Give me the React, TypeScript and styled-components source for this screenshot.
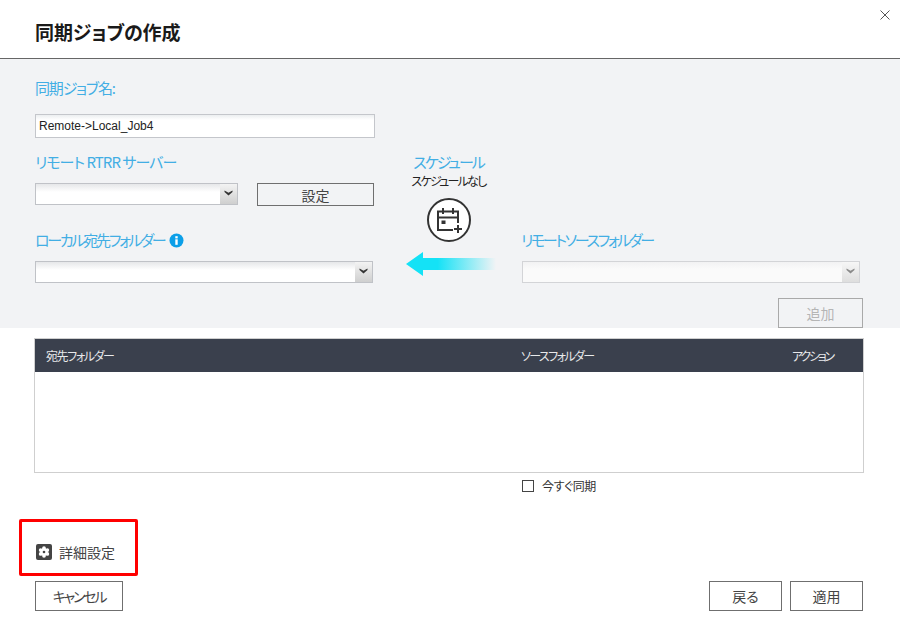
import React from "react";
import styled, { createGlobalStyle } from "styled-components";

const Global = createGlobalStyle`
  html, body { margin: 0; padding: 0; background: #fff; }
  body { font-family: "Noto Sans CJK JP", "Liberation Sans", sans-serif; font-feature-settings: "palt"; }
  * { box-sizing: border-box; }
`;

const Dialog = styled.div`
  position: relative;
  width: 900px;
  height: 635px;
  overflow: hidden;
  background: #fff;
`;
const CloseButton = styled.button`
  position: absolute;
  top: 9px;
  right: 9px;
  width: 12px;
  height: 12px;
  padding: 0;
  border: 0;
  background: none;
  display: flex;
`;
const Header = styled.header`
  height: 59px;
  padding: 18px 0 0 35px;
  border-bottom: 1px solid #666;
`;
const Title = styled.h1`
  margin: 0;
  font-size: 19px;
  line-height: 28px;
  font-weight: 700;
  letter-spacing: -0.1px;
  color: #1a1a1a;
`;
const Panel = styled.section`
  height: 269px;
  background: #f2f3f5;
  padding: 19px 0 0 35px;
  display: grid;
  grid-template-columns: 340px 147px 341px;
`;
const Column = styled.div<{ $top?: number }>`
  display: flex;
  flex-direction: column;
  margin-top: ${(p) => p.$top ?? 0}px;
`;
const CenterColumn = styled(Column)`
  align-items: center;
`;
const Label = styled.label<{ $top?: number; $track: number; $indent?: number }>`
  display: flex;
  align-items: center;
  gap: 5px;
  height: 20px;
  margin-top: ${(p) => p.$top ?? 0}px;
  margin-left: ${(p) => p.$indent ?? 0}px;
  font-size: 15px;
  line-height: 20px;
  letter-spacing: ${(p) => p.$track}px;
  color: #42aee4;
`;
const NameInput = styled.div`
  height: 24px;
  margin-top: 16px;
  padding-left: 3px;
  border: 1px solid #c4c6cb;
  background: linear-gradient(#eceef0, #fff 5px);
  font-family: "Liberation Sans", sans-serif;
  font-size: 12px;
  line-height: 22px;
  color: #222;
`;
const Row = styled.div`
  display: flex;
  align-items: flex-start;
  margin-top: 11px;
  gap: 19px;
`;
const Select = styled.div<{ $width: number; $disabled?: boolean; $top?: number }>`
  display: flex;
  justify-content: flex-end;
  width: ${(p) => p.$width}px;
  height: 22px;
  margin-top: ${(p) => p.$top ?? 0}px;
  border: 1px solid ${(p) => (p.$disabled ? "#d3d4d7" : "#c0c2c7")};
  background: ${(p) =>
    p.$disabled ? "linear-gradient(#f2f2f3, #fafafa 7px)" : "linear-gradient(#e6e7e9, #fff 8px)"};
`;
const SelectArrow = styled.span<{ $disabled?: boolean }>`
  width: 17px;
  height: 100%;
  display: flex;
  align-items: center;
  justify-content: center;
  padding-bottom: 3px;
  background: ${(p) =>
    p.$disabled ? "linear-gradient(#f6f6f6, #dedede)" : "linear-gradient(#f3f3f3, #cfcfcf)"};
`;
const Button = styled.button<{ $width: number; $muted?: boolean; $height?: number; $track?: number }>`
  width: ${(p) => p.$width}px;
  height: ${(p) => p.$height ?? 30}px;
  padding: 0;
  border: 1px solid ${(p) => (p.$muted ? "#a9a9a9" : "#6f6f6f")};
  background: transparent;
  font-family: inherit;
  font-feature-settings: "palt";
  font-size: 14px;
  letter-spacing: ${(p) => p.$track ?? 0}px;
  color: ${(p) => (p.$muted ? "#b5b5b5" : "#444")};
`;
const ScheduleTitle = styled.div`
  height: 20px;
  font-size: 15px;
  line-height: 20px;
  letter-spacing: -2px;
  color: #42aee4;
`;
const ScheduleNote = styled.div`
  height: 18px;
  font-size: 12px;
  line-height: 18px;
  letter-spacing: -1.75px;
  color: #222;
`;
const ScheduleButton = styled.div`
  width: 44px;
  height: 44px;
  margin-top: 8px;
  border: 2px solid #333;
  border-radius: 50%;
  background: #fff;
  display: flex;
  align-items: center;
  justify-content: center;
`;
const FlowArrow = styled.svg`
  display: block;
  margin: 10px 0 0 4px;
`;
const AddRow = styled.div`
  display: flex;
  justify-content: flex-end;
  margin-top: 15px;
`;
const Table = styled.section`
  width: 830px;
  height: 135px;
  margin: 10px 0 0 34px;
  border: 1px solid #cfcfcf;
`;
const TableHead = styled.div`
  height: 33px;
  display: grid;
  grid-template-columns: 475px 1fr auto;
  align-items: center;
  padding: 0 30px 0 11px;
  background: #3a404d;
  font-size: 12px;
  color: #e8e9eb;
`;
const HeadCell = styled.span<{ $track: number }>`
  letter-spacing: ${(p) => p.$track}px;
`;
const SyncRow = styled.label`
  display: flex;
  align-items: center;
  gap: 8px;
  height: 14px;
  margin: 6px 0 0 522px;
  font-size: 12px;
  line-height: 14px;
  letter-spacing: -0.4px;
  color: #333;
`;
const CheckBox = styled.span`
  width: 12px;
  height: 12px;
  border: 1px solid #444;
  background: #fff;
`;
const DetailRow = styled.div`
  position: relative;
  display: flex;
  align-items: center;
  gap: 7px;
  width: max-content;
  height: 16px;
  margin: 51px 0 0 36px;
  font-size: 14px;
  line-height: 15px;
  color: #444;
`;
const Highlight = styled.div`
  position: absolute;
  left: -17px;
  top: -25px;
  width: 119px;
  height: 57px;
  border: 3px solid #f00;
  border-radius: 2px;
`;
const Footer = styled.footer`
  display: flex;
  justify-content: space-between;
  margin-top: 21px;
  padding: 0 37px 0 35px;
`;
const FooterGroup = styled.div`
  display: flex;
  gap: 8px;
`;

const Chevron = ({ color }: { color: string }) => (
  <svg width="9" height="6" viewBox="0 0 9 6">
    <path d="M0.5 0.5 L4.5 2.8 L8.5 0.5 L8.5 2 L4.5 5.5 L0.5 2 Z" fill={color} />
  </svg>
);

export default function App() {
  return (
    <Dialog>
      <Global />
      <CloseButton aria-label="close">
        <svg width="12" height="12" viewBox="0 0 12 12">
          <path d="M1.5 1.5 L10.5 10.5 M10.5 1.5 L1.5 10.5" stroke="#555" strokeWidth="1" fill="none" />
        </svg>
      </CloseButton>
      <Header>
        <Title>同期ジョブの作成</Title>
      </Header>
      <Panel>
        <Column>
          <Label $track={-1.2}>同期ジョブ名:</Label>
          <NameInput>Remote-&gt;Local_Job4</NameInput>
          <Label $top={14} $track={-0.95}>リモート RTRR サーバー</Label>
          <Row>
            <Select $width={203} $top={0}>
              <SelectArrow>
                <Chevron color="#333" />
              </SelectArrow>
            </Select>
            <Button $width={117} $height={23}>設定</Button>
          </Row>
          <Label $top={24} $track={-2.25}>
            ローカル宛先フォルダー
            <svg width="15" height="15" viewBox="0 0 15 15">
              <circle cx="7.5" cy="7.5" r="7" fill="#0c9fe8" />
              <rect x="6.3" y="6.3" width="2.4" height="5.5" fill="#fff" />
              <rect x="6.3" y="3.2" width="2.4" height="2.2" fill="#fff" />
            </svg>
          </Label>
          <Select $width={338} $top={11}>
            <SelectArrow>
              <Chevron color="#333" />
            </SelectArrow>
          </Select>
        </Column>
        <CenterColumn $top={74}>
          <ScheduleTitle>スケジュール</ScheduleTitle>
          <ScheduleNote>スケジュールなし</ScheduleNote>
          <ScheduleButton>
            <svg width="26" height="26" viewBox="0 0 26 26" fill="none" stroke="#333" strokeWidth="2">
              <path d="M1 4.5 H22 V16 M2 4.5 V23 H17 M2 10.5 H22 M7 1 V7 M17 1 V7" />
              <rect x="5.5" y="13.5" width="4" height="3.5" fill="#333" stroke="none" />
              <path d="M22 18 V26 M18 22 H26" />
            </svg>
          </ScheduleButton>
          <FlowArrow width="90" height="24" viewBox="0 0 90 24">
            <defs>
              <linearGradient id="flow" x1="0" x2="1" y1="0" y2="0">
                <stop offset="0" stopColor="#14e2f6" />
                <stop offset="0.35" stopColor="#14e2f6" />
                <stop offset="1" stopColor="#14e2f6" stopOpacity="0" />
              </linearGradient>
            </defs>
            <path d="M0 12 L17 0 V6 H90 V18 H17 V24 Z" fill="url(#flow)" />
          </FlowArrow>
        </CenterColumn>
        <Column $top={152}>
          <Label $track={-2.3} $indent={-1}>リモートソースフォルダー</Label>
          <Select $width={338} $disabled $top={11}>
            <SelectArrow $disabled>
              <Chevron color="#8a8a8a" />
            </SelectArrow>
          </Select>
          <AddRow>
            <Button $width={85} $muted>追加</Button>
          </AddRow>
        </Column>
      </Panel>
      <Table>
        <TableHead>
          <HeadCell $track={-1.4}>宛先フォルダー</HeadCell>
          <HeadCell $track={-1.6}>ソースフォルダー</HeadCell>
          <HeadCell $track={-2.2}>アクション</HeadCell>
        </TableHead>
      </Table>
      <SyncRow>
        <CheckBox />
        今すぐ同期
      </SyncRow>
      <DetailRow>
        <Highlight />
        <svg width="16" height="16" viewBox="0 0 16 16">
          <rect width="16" height="16" rx="2" fill="#444" />
          <g fill="#fff">
            <circle cx="8" cy="8" r="3.6" />
            <circle cx="8" cy="4.2" r="1.9" />
            <circle cx="8" cy="11.8" r="1.9" />
            <circle cx="4.7" cy="6.1" r="1.9" />
            <circle cx="11.3" cy="6.1" r="1.9" />
            <circle cx="4.7" cy="9.9" r="1.9" />
            <circle cx="11.3" cy="9.9" r="1.9" />
          </g>
          <circle cx="8" cy="8" r="1.3" fill="#444" />
        </svg>
        詳細設定
      </DetailRow>
      <Footer>
        <Button $width={88} $track={-2.2}>キャンセル</Button>
        <FooterGroup>
          <Button $width={73}>戻る</Button>
          <Button $width={73}>適用</Button>
        </FooterGroup>
      </Footer>
    </Dialog>
  );
}
